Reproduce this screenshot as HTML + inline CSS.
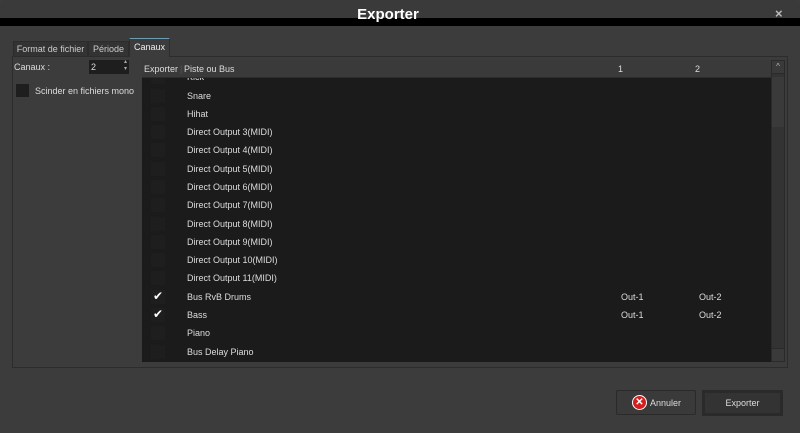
<!DOCTYPE html><html><head><style>
*{margin:0;padding:0;box-sizing:border-box}
body{width:800px;height:433px;background:#3c3c3c;font-family:"Liberation Sans",sans-serif;font-size:9px;color:#ddd;position:relative;overflow:hidden}
.a{position:absolute}
.row{position:absolute;left:0;width:629px;height:18px;line-height:18px}
.cb{position:absolute;left:9px;top:2px;width:14px;height:14px;background:#1e1e1e}
.row span{position:absolute;left:45px}
</style></head><body>
<div class="a" style="left:0;top:0;width:800px;height:18px;background:#3a3a3a;border-radius:6px 6px 0 0"></div>
<div class="a" style="left:0;top:18px;width:800px;height:8px;background:#000"></div>
<div class="a" style="left:0;top:6px;width:776px;text-align:center;font-weight:bold;font-size:15px;color:#fff">Exporter</div>
<div class="a" style="left:775px;top:6px;font-size:13px;font-weight:bold;color:#bbb">×</div>
<div class="a" style="left:12px;top:56px;width:776px;height:312px;border:1px solid #2c2c2c"></div>
<div class="a" style="left:13px;top:41px;width:75px;height:16px;background:#333;border:1px solid #2c2c2c;color:#ccc;line-height:14px;text-align:center">Format de fichier</div>
<div class="a" style="left:88px;top:41px;width:41px;height:16px;background:#333;border:1px solid #2c2c2c;color:#ccc;line-height:14px;text-align:center">Période</div>
<div class="a" style="left:129px;top:38px;width:41px;height:19px;background:#3c3c3c;border:1px solid #2c2c2c;border-top:1px solid #6a9bb0;border-bottom:none;color:#eee;line-height:17px;text-align:center">Canaux</div>
<div class="a" style="left:14px;top:62px;color:#ddd">Canaux :</div>
<div class="a" style="left:89px;top:60px;width:40px;height:14px;background:#1e1e1e;color:#ddd;padding-left:2px;line-height:14px">2<span style="position:absolute;right:2px;top:-1px;font-size:6px;line-height:7px;color:#aaa">▴<br>▾</span></div>
<div class="a" style="left:16px;top:84px;width:13px;height:13px;background:#1e1e1e"></div>
<div class="a" style="left:35px;top:86px">Scinder en fichiers mono</div>
<div class="a" style="left:142px;top:60px;width:629px;height:18px;background:#3a3a3a;border-bottom:1px solid #2c2c2c;line-height:18px">
<span class="a" style="left:2px">Exporter</span><span class="a" style="left:38px;color:#555">|</span><span class="a" style="left:42px">Piste ou Bus</span>
<span class="a" style="left:476px">1</span><span class="a" style="left:553px">2</span></div>
<div class="a" style="left:142px;top:78px;width:629px;height:284px;background:#1b1b1b;overflow:hidden">
<div class="row" style="top:-10px"><div class="cb"></div><span>Kick</span></div>
<div class="row" style="top:9px"><div class="cb"></div><span>Snare</span></div>
<div class="row" style="top:27px"><div class="cb"></div><span>Hihat</span></div>
<div class="row" style="top:45px"><div class="cb"></div><span>Direct Output 3(MIDI)</span></div>
<div class="row" style="top:63px"><div class="cb"></div><span>Direct Output 4(MIDI)</span></div>
<div class="row" style="top:82px"><div class="cb"></div><span>Direct Output 5(MIDI)</span></div>
<div class="row" style="top:100px"><div class="cb"></div><span>Direct Output 6(MIDI)</span></div>
<div class="row" style="top:118px"><div class="cb"></div><span>Direct Output 7(MIDI)</span></div>
<div class="row" style="top:137px"><div class="cb"></div><span>Direct Output 8(MIDI)</span></div>
<div class="row" style="top:155px"><div class="cb"></div><span>Direct Output 9(MIDI)</span></div>
<div class="row" style="top:173px"><div class="cb"></div><span>Direct Output 10(MIDI)</span></div>
<div class="row" style="top:191px"><div class="cb"></div><span>Direct Output 11(MIDI)</span></div>
<div class="row" style="top:210px"><div class="cb" style="color:#fff;font-size:12px;line-height:12px;text-align:center">✔</div><span>Bus RvB Drums</span><span style="left:479px">Out-1</span><span style="left:557px">Out-2</span></div>
<div class="row" style="top:228px"><div class="cb" style="color:#fff;font-size:12px;line-height:12px;text-align:center">✔</div><span>Bass</span><span style="left:479px">Out-1</span><span style="left:557px">Out-2</span></div>
<div class="row" style="top:246px"><div class="cb"></div><span>Piano</span></div>
<div class="row" style="top:265px"><div class="cb"></div><span>Bus Delay Piano</span></div>
</div>
<div class="a" style="left:771px;top:60px;width:14px;height:302px;background:#333;border:1px solid #2a2a2a"></div>
<div class="a" style="left:771px;top:60px;width:14px;height:14px;background:#3a3a3a;border:1px solid #2a2a2a;color:#bbb;font-size:8px;text-align:center;line-height:12px">^</div>
<div class="a" style="left:772px;top:77px;width:12px;height:50px;background:#3a3a3a"></div>
<div class="a" style="left:771px;top:348px;width:14px;height:14px;background:#3a3a3a;border:1px solid #2a2a2a"></div>
<div class="a" style="left:616px;top:390px;width:80px;height:25px;background:#3a3a3a;border:1px solid #2a2a2a;border-radius:2px"></div>
<div class="a" style="left:632px;top:395px;width:15px;height:15px;border-radius:50%;background:#d02020;border:1px solid #fff;color:#fff;font-size:10px;font-weight:bold;text-align:center;line-height:13px">✕</div>
<div class="a" style="left:650px;top:398px;color:#ddd">Annuler</div>
<div class="a" style="left:702px;top:390px;width:81px;height:26px;background:#333;border:3px solid #2a2a2a;color:#ddd;text-align:center;line-height:20px">Exporter</div>
</body></html>
